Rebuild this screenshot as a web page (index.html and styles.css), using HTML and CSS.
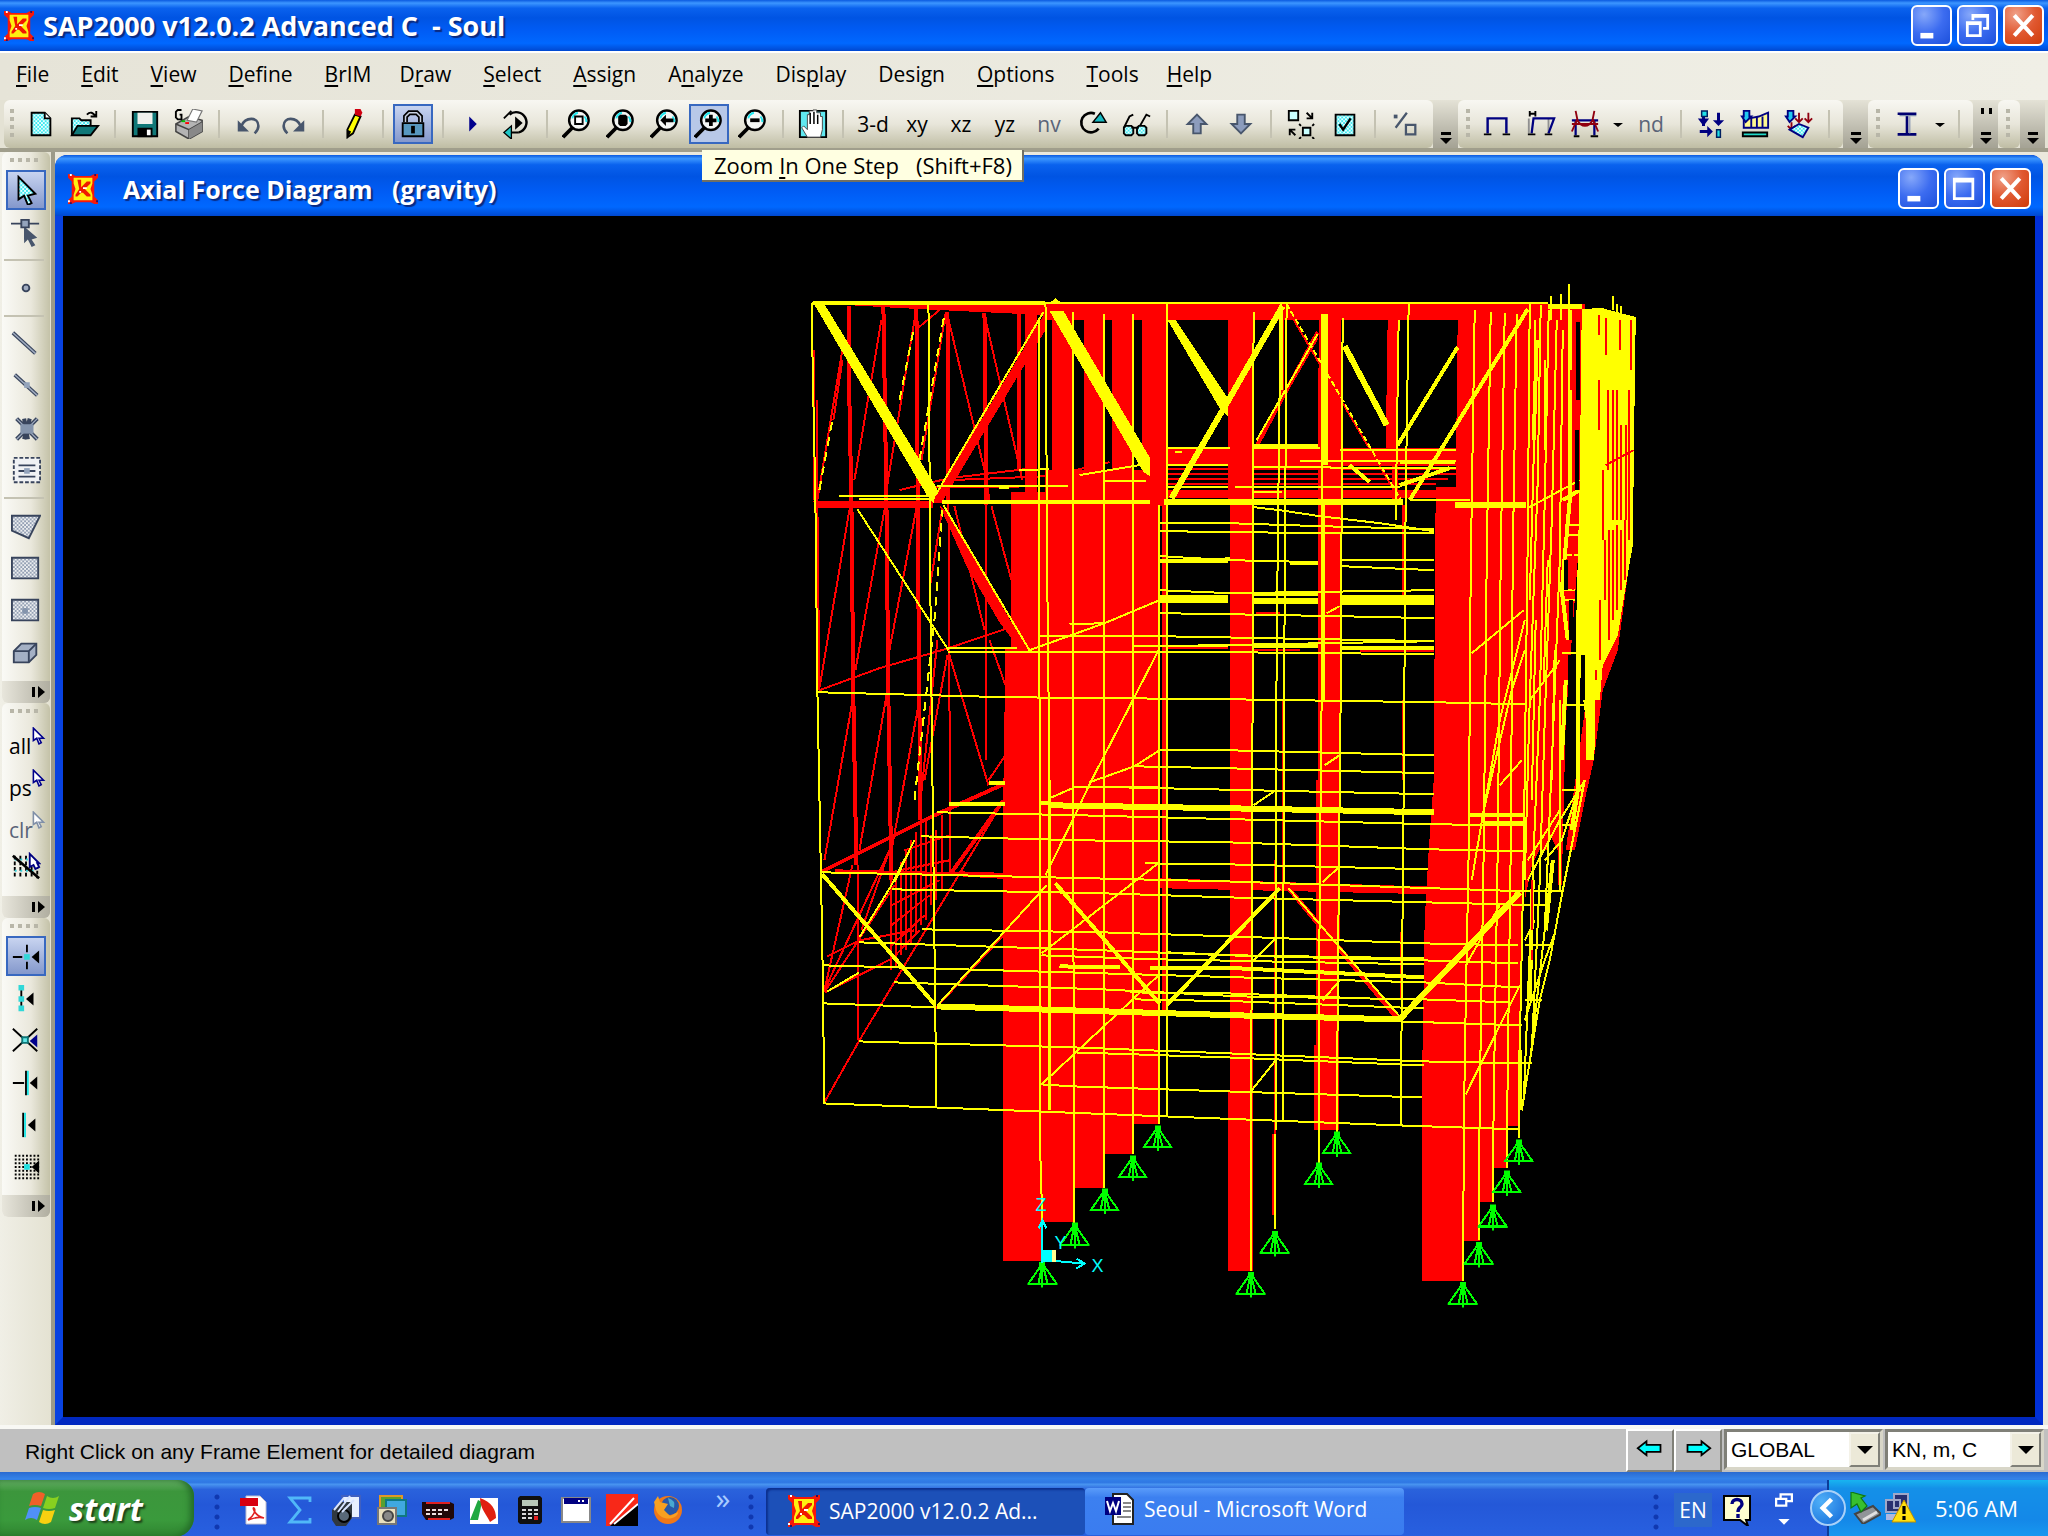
FILE: index.html
```html
<!DOCTYPE html>
<html lang="en">
<head>
    <meta charset="UTF-8">
    <meta name="viewport" content="width=device-width, initial-scale=1.0">
    <title>SAP2000 v12.0.2 Advanced C - Soul</title>
    <link rel="stylesheet" href="styles.css">
</head>
<body>

    <!-- Shared icon parts -->
    <svg class="defs" width="0" height="0" aria-hidden="true">
        <defs>
            <pattern id="dither" width="2" height="2" patternUnits="userSpaceOnUse">
                <rect width="2" height="2" fill="#e8ffff"/><path d="M0 0h1v1H0zM1 1h1v1H1z" fill="#3fe8f0"/>
            </pattern>
            <pattern id="dither-gray" width="2" height="2" patternUnits="userSpaceOnUse">
                <rect width="2" height="2" fill="#eceef0"/><path d="M0 0h1v1H0zM1 1h1v1H1z" fill="#94a0b4"/>
            </pattern>
            <symbol id="sap" viewBox="0 0 16 16">
                <path d="M0 0h2l2 1h8l2-1h2v2l-2 2v8l2 2v2h-2l-2-1H4l-2 1H0v-2l2-2V4L0 2z" fill="#f81808"/>
                <path d="M3 2h10v3l-1 3 1 3v3H3v-3l1-3-1-3z" fill="#fff010"/>
                <path d="M5 3h2v4l3-3h2v1L9 8l3 3v1h-2L8 10H7l-2 2H4v-1l2-3z" fill="#f01800"/>
                <path d="M8 7h2v1H8zM6 9h1v1H6zM1 0h1v1H1zM0 14h1v1H0z" fill="#fff"/>
                <path d="M14 0h1v1h-1zM15 14h1v1h-1zM1 15h1v1H1z" fill="#301060"/>
            </symbol>
            <symbol id="lens" viewBox="0 0 16 16">
                <circle cx="9" cy="6" r="5.200" fill="#f4f6f4" stroke="#000" stroke-width="1.300"/>
                <path d="M5.500 5a4 4 0 0 1 3-3M12 4a4 4 0 0 1 1 3" stroke="#20e8f0" fill="none"/>
                <path d="M5.500 10l-5 5" stroke="#000" stroke-width="2"/>
            </symbol>
            <symbol id="pick" viewBox="0 0 12 16">
                <path d="M1 1v11l3-2 2 5 2-1-2-4h4z" fill="#fff" stroke="currentColor" stroke-width="1.400"/>
            </symbol>
            <symbol id="support" viewBox="0 0 30 26">
                <path d="M15 2L1 22h28zM15 2l-4 20M15 2v24M15 2l5 20" fill="none" stroke="#00ff00" stroke-width="2"/>
                <path d="M12 0h6v6h-6z" fill="#00ff00"/>
            </symbol>
        </defs>
    </svg>

    <!-- Application title bar -->
    <header class="title-bar">
        <svg class="app-icon"><use href="#sap"/></svg>
        <h1>SAP2000 v12.0.2 Advanced C&nbsp; - Soul</h1>
        <div class="window-buttons">
            <button aria-label="Minimize"><svg viewBox="0 0 20 20"><path d="M4 14h7v3H4z" fill="#fff"/></svg></button>
            <button aria-label="Restore"><svg viewBox="0 0 20 20"><path d="M7.500 7V4.500h8v7H13M7 5h9" fill="none" stroke="#fff" stroke-width="1.500"/><path d="M4.500 8.500h7v7h-7zM4 9h8" fill="none" stroke="#fff" stroke-width="1.500"/></svg></button>
            <button class="close" aria-label="Close"><svg viewBox="0 0 20 20"><path d="M5 4.500l10 11M15 4.500l-10 11" stroke="#fff" stroke-width="2.200"/></svg></button>
        </div>
    </header>

    <!-- Menu -->
    <nav class="menu-bar">
        <button><u>F</u>ile</button>
        <button><u>E</u>dit</button>
        <button><u>V</u>iew</button>
        <button><u>D</u>efine</button>
        <button><u>B</u>rIM</button>
        <button class="tight">D<u>r</u>aw</button>
        <button><u>S</u>elect</button>
        <button><u>A</u>ssign</button>
        <button>A<u>n</u>alyze</button>
        <button>Dis<u>p</u>lay</button>
        <button>Desi<u>g</u>n</button>
        <button><u>O</u>ptions</button>
        <button><u>T</u>ools</button>
        <button class="tight"><u>H</u>elp</button>
    </nav>

    <!-- Toolbars -->
    <div class="toolbars">
        <div class="toolbar main-tools">
            <i class="grip"></i>
            <button aria-label="New"><svg viewBox="0 0 16 16"><path d="M3 2h7l3 3v9H3z" fill="url(#dither)" stroke="#000"/><path d="M10 2v3h3" fill="#fff" stroke="#000"/></svg></button>
            <button aria-label="Open"><svg viewBox="0 0 16 16"><path d="M1 14V5h4l1 1h5v3" fill="url(#dither)" stroke="#000"/><path d="M1 14l3-5h11l-4 5z" fill="#107878" stroke="#000"/><path d="M9 3c2-2 3-1 5 1M14 1v3h-3" fill="none" stroke="#000"/></svg></button>
            <i class="sep"></i>
            <button aria-label="Save"><svg viewBox="0 0 16 16"><path d="M1.500 1.500h13v13h-13z" fill="#107878" stroke="#000"/><path d="M4 2h8v6H4z" fill="#f0f0ec"/><path d="M4 10h8v5H4z" fill="#000"/><path d="M9 11h2v3H9z" fill="#fff"/></svg></button>
            <button aria-label="Print graphics"><svg viewBox="0 0 16 16"><path d="M1 8l7-4 7 2v6l-7 4-7-4z" fill="#b4b4b4" stroke="#444" stroke-width=".8"/><path d="M1 8l7 3 7-4M8 11v5" stroke="#444" stroke-width=".8" fill="none"/><path d="M8 11l7-4v5l-7 4z" fill="#888"/><path d="M7 6l3-6 5 1-3 6z" fill="#fff" stroke="#777" stroke-width=".6"/><path d="M6 7h2v1H6z" fill="red"/><path d="M4 6h2v1H4z" fill="#00c000"/><path d="M4 .5H2l-1 1v3l1 1h2V3H3" fill="none" stroke="#000"/></svg></button>
            <i class="sep"></i>
            <button aria-label="Undo"><svg viewBox="0 0 16 16"><path d="M4 9c2-5 9-5 9 0 0 2-1 3-2 4" fill="none" stroke="#48566c" stroke-width="1.400"/><path d="M2 6v6h6z" fill="#48566c"/></svg></button>
            <button aria-label="Redo"><svg viewBox="0 0 16 16"><path d="M12 9C10 4 3 4 3 9c0 2 1 3 2 4" fill="none" stroke="#48566c" stroke-width="1.400"/><path d="M14 6v6H8z" fill="#48566c"/></svg></button>
            <i class="sep"></i>
            <button aria-label="Refresh"><svg viewBox="0 0 16 16"><path d="M9 3l3 1-4 9-3 2V11z" fill="#ffff00" stroke="#000"/><path d="M9 0h3l1 2-1 2-3-1z" fill="#d00010"/><path d="M5 11l2 1-2 4z" fill="#000"/></svg></button>
            <i class="sep"></i>
            <button class="active" aria-label="Lock model"><svg viewBox="0 0 16 16"><path d="M4 7V4l2-2h4l2 2v3" fill="none" stroke="#000" stroke-width="2.600"/><path d="M4 7V4l2-2h4l2 2v3" fill="none" stroke="#c8d0e0" stroke-width=".8"/><path d="M2.500 7.500h11v7h-11z" fill="#5898c0" stroke="#000"/><path d="M7 9h2v4H7z" fill="#000"/></svg></button>
            <i class="sep"></i>
            <button aria-label="Run"><svg viewBox="0 0 16 16"><path d="M6 4l4 4-4 4z" fill="#00008c"/></svg></button>
            <button aria-label="Animate"><svg viewBox="0 0 16 16"><path d="M4 3a5.500 5.500 0 1 1 5 9.500" fill="none" stroke="#000" stroke-width="1.300"/><path d="M7 4l4 3.500L7 11z" fill="#000"/><path d="M1 5l4-4M9 12.500H5" stroke="#000"/><path d="M5 9v7l-4-3.500z" fill="#20c8c8" stroke="#000" stroke-width=".7"/></svg></button>
            <i class="sep"></i>
            <button aria-label="Rubber band zoom"><svg viewBox="0 0 16 16"><use href="#lens"/><path d="M7 4h4v4H7z" fill="#fff" stroke="#000"/></svg></button>
            <button aria-label="Full view"><svg viewBox="0 0 16 16"><use href="#lens"/><path d="M7.500 3h3l1 1v4l-1 1h-3l-1-1V4z"/></svg></button>
            <button aria-label="Previous zoom"><svg viewBox="0 0 16 16"><use href="#lens"/><path d="M5.500 6l3-3v2h4v2h-4v2z"/></svg></button>
            <button class="active zoom-in" aria-label="Zoom in one step"><svg viewBox="0 0 16 16"><use href="#lens"/><path d="M8 3h2v2h2v2h-2v2H8V7H6V5h2z"/></svg>
                <span class="tooltip" role="tooltip">Zoom <u>I</u>n One Step&nbsp;&nbsp; (Shift+F8)</span>
            </button>
            <button aria-label="Zoom out one step"><svg viewBox="0 0 16 16"><use href="#lens"/><path d="M6.500 5h5v2h-5z"/></svg></button>
            <i class="sep"></i>
            <button aria-label="Pan"><svg viewBox="0 0 16 16"><path d="M1 1h14v14H1z" fill="#60e8f0" stroke="#000"/><path d="M5 15l-3-5 1-1 2 2V3h1V1h2V.5h2V2h2v2h1v7l-1 4z" fill="#fff" stroke="#444" stroke-width=".5"/><path d="M6.500 8V2M8.500 8V1.500M10.500 8V3" stroke="#000" stroke-width=".8"/></svg></button>
            <i class="sep"></i>
            <button>3-d</button>
            <button>xy</button>
            <button>xz</button>
            <button>yz</button>
            <button class="dim">nv</button>
            <button aria-label="Rotate 3D view"><svg viewBox="0 0 16 16"><path d="M9 2.500a5.200 5.200 0 1 0 2 8" fill="none" stroke="#000" stroke-width="1.400"/><path d="M12 2l-4 5h7z" fill="#18b8c0" stroke="#000" stroke-width=".8"/></svg></button>
            <button aria-label="Perspective"><svg viewBox="0 0 16 16"><path d="M1 10l3-6 2-1M9 10l4-7 2 1" fill="none" stroke="#000"/><path d="M1 10l1-1h3l1 1v3l-1 1H2l-1-1zM8 10l1-1h3l1 1v3l-1 1H9l-1-1z" fill="url(#dither)" stroke="#000"/><path d="M5 10h4" stroke="#000"/></svg></button>
            <i class="sep"></i>
            <button aria-label="Move up"><svg viewBox="0 0 16 16"><path d="M8 3l5 5h-3v5H6V8H3z" fill="#8c9cbc" stroke="#48566c"/></svg></button>
            <button aria-label="Move down"><svg viewBox="0 0 16 16"><path d="M8 13l5-5h-3V3H6v5H3z" fill="#8c9cbc" stroke="#48566c"/></svg></button>
            <i class="sep"></i>
            <button aria-label="Object shrink"><svg viewBox="0 0 16 16"><path d="M1.500 1h5v5h-5zM9 10h4v4H9z" fill="#c8ffff" stroke="#000"/><path d="M11 2l3 3M14 2v3h-3M5 14l-3-3M2 14v-3h3M8 9l-1-1M14 9l1-1M8 15l-1 1M14 15l1 1" fill="none" stroke="#000"/></svg></button>
            <button aria-label="Display options"><svg viewBox="0 0 16 16"><path d="M3 3h10v11H3z" fill="url(#dither)" stroke="#000"/><path d="M5 8l2 3 4-6" fill="none" stroke="#000" stroke-width="1.300"/></svg></button>
            <i class="sep"></i>
            <button aria-label="Assign to group"><svg viewBox="0 0 16 16"><path d="M3 10l6-8M8.500 8.500h5v5h-5z" fill="none" stroke="#48566c" stroke-width="1.200"/><path d="M2 3h2v2H2z" fill="#48566c"/></svg></button>
        </div>
        <i class="overflow"></i>

        <div class="toolbar">
            <i class="grip"></i>
            <button aria-label="Undeformed shape"><svg viewBox="0 0 16 16"><path d="M3 13V5h10v8" fill="none" stroke="#000080" stroke-width="1.300"/><path d="M1 13.500h4M11 13.500h4" stroke="#000"/></svg></button>
            <button aria-label="Deformed shape"><svg viewBox="0 0 16 16"><path d="M1.500 13V5M12 13V5" stroke="#909090"/><path d="M3 13l1-8h11l-3 8" fill="none" stroke="#000080" stroke-width="1.200"/><path d="M1 13.500h4M10 13.500h4M2 1v3M5 1v3M2 2.500h3" stroke="#000"/></svg></button>
            <button aria-label="Forces"><svg viewBox="0 0 16 16"><path d="M3 14V6h10v8M1 6h14" fill="none" stroke="#000080" stroke-width="1.200"/><path d="M3 1l1 5c2 4 6 4 8 0l1-5M1 12L4 5M15 12l-3-7M1 8h14" fill="none" stroke="#900010"/><path d="M2 14.500h3M11 14.500h4" stroke="#000"/></svg></button>
            <button class="drop" aria-label="Force types"><svg viewBox="0 0 10 16"><path d="M0 7h10l-5 4z"/></svg></button>
            <button class="dim">nd</button>
            <i class="sep"></i>
            <button aria-label="Joint loads"><svg viewBox="0 0 16 16"><path d="M4 1v8M12 2v6M2 12h6" stroke="#000080" stroke-width="1.600"/><path d="M1 5h6l-3 4zM9 6h6l-3 3zM6 9l3 3-3 3z" fill="#000080"/><path d="M3 1h3v3H3zM11 11h2v4h-2z" fill="#20e0e8" stroke="#002060" stroke-width=".8"/></svg></button>
            <button aria-label="Frame loads"><svg viewBox="0 0 16 16"><path d="M2 10V4l3 1 5-1 5-2v8z" fill="#fff890" stroke="#000080"/><path d="M6 4v6M9 4v6M12 4v6" stroke="#000080"/><path d="M2 1h3v3h1L3 7 1 4h1z" fill="#20c8f0" stroke="#000080"/><path d="M1.500 12.500h13v2h-13z" fill="#20d8c8" stroke="#000"/></svg></button>
            <button aria-label="Shell loads"><svg viewBox="0 0 16 16"><path d="M2 1h3v3h1L3 7 1 4h1z" fill="#20c8f0" stroke="#000080"/><path d="M8 2v5M13 2v5M4 7v4M6 5l2 2 2-2M11 5l2 2 2-2M2 9l2 2 2-2" stroke="#900010" fill="none"/><path d="M3 11l5-3 5 2-3 5z" fill="url(#dither)" stroke="#000080"/></svg></button>
            <i class="sep"></i>
        </div>
        <i class="overflow"></i>

        <div class="toolbar">
            <i class="grip"></i>
            <button aria-label="Steel design"><svg viewBox="0 0 16 16"><path d="M3 2.500h10M3 13.500h10M8 3v10" stroke="#000070" stroke-width="1.400"/><path d="M4 3.500h9M9.500 4v9" stroke="#8090b0" stroke-width=".6"/></svg></button>
            <button class="drop" aria-label="Design codes"><svg viewBox="0 0 10 16"><path d="M0 7h10l-5 4z"/></svg></button>
            <i class="sep"></i>
        </div>
        <i class="overflow more"></i>
        <div class="toolbar stub"><i class="grip"></i></div>
        <i class="overflow"></i>
    </div>

    <main class="workspace">
        <!-- Drawing, selection and snap tools -->
        <aside class="dock">
            <div class="side-tools">
                <i class="grip"></i>
                <button class="active" aria-label="Select"><svg viewBox="0 0 16 16"><path d="M4 1v12l3-2 2 5 2-1-2-4 4-1z" fill="url(#dither)" stroke="#000"/></svg></button>
                <button aria-label="Reshape"><svg viewBox="0 0 16 16"><path d="M0 3.500h15M7.500 6v6" fill="none" stroke="#38445c"/><path d="M7 5l7 6-3 1 2 3-2 1-2-4-2 2z" fill="#48566c"/><path d="M5.500 1.500h4v4h-4z" fill="#94a4bc" stroke="#38445c"/></svg></button>
                <i class="sep"></i>
                <button aria-label="Draw joint"><svg viewBox="0 0 16 16"><circle cx="8" cy="8" r="1.800" fill="#a0acc0" stroke="#38445c"/></svg></button>
                <i class="sep"></i>
                <button aria-label="Draw frame"><svg viewBox="0 0 16 16"><path d="M1 2l12 11" stroke="#38445c" stroke-width="2"/><path d="M1 2l12 11" stroke="#a0acc0" stroke-width=".8"/></svg></button>
                <button aria-label="Quick draw frame"><svg viewBox="0 0 16 16"><path d="M2 2l12 11" stroke="#38445c" stroke-width="2"/><path d="M2 2l12 11" stroke="#a0acc0" stroke-width=".8"/><path d="M7 6h3v3H7z" fill="#94a4bc"/></svg></button>
                <button aria-label="Quick draw braces"><svg viewBox="0 0 16 16"><path d="M3 3l11 11M14 3L3 14M7 3l2 11M10 3L7 14" stroke="#38445c" stroke-width="2.200"/><path d="M3 3l11 11M14 3L3 14" stroke="#a0acc0" stroke-width=".7"/><path d="M5 6h7v5H5z" fill="#8494ac"/></svg></button>
                <button aria-label="Quick draw secondary beams"><svg viewBox="0 0 16 16"><path d="M1.500 1.500h14v13h-14z" fill="#f0f2f4" stroke="#38445c" stroke-dasharray="2 1"/><path d="M4 5.500h9M4 8.500h9M4 11.500h9" stroke="#38445c"/><path d="M7 7h3v3H7z" fill="#94a4bc"/></svg></button>
                <i class="sep"></i>
                <button aria-label="Draw poly area"><svg viewBox="0 0 16 16"><path d="M.500 2.500h15l-6 12-9-4z" fill="url(#dither-gray)" stroke="#38445c"/></svg></button>
                <button aria-label="Draw rectangular area"><svg viewBox="0 0 16 16"><path d="M.500 2.500h14v11h-14z" fill="url(#dither-gray)" stroke="#38445c"/></svg></button>
                <button aria-label="Quick draw area"><svg viewBox="0 0 16 16"><path d="M.500 2.500h14v11h-14z" fill="url(#dither-gray)" stroke="#38445c"/><path d="M6 7h3v3H6z" fill="#8494ac"/></svg></button>
                <button aria-label="Draw solid"><svg viewBox="0 0 16 16"><path d="M1.500 7.500l4-4h8v6l-4 4h-8z" fill="#a4b0c4" stroke="#38445c"/><path d="M1.500 7.500h8v6M9.500 7.500l4-4" fill="none" stroke="#38445c"/></svg></button>
                <i class="side-overflow"></i>
            </div>
            <div class="side-tools">
                <i class="grip"></i>
                <button class="word">all<svg class="arrow"><use href="#pick"/></svg></button>
                <button class="word">ps<svg class="arrow"><use href="#pick"/></svg></button>
                <button class="word dim">clr<svg class="arrow"><use href="#pick"/></svg></button>
                <button aria-label="Intersecting line select"><svg viewBox="0 0 16 16"><path d="M2 2v12M5 2v12M8 2v12M11 2v12M14 7v7" stroke="#000" stroke-dasharray="2 1"/><path d="M2 4h12M2 10h12" stroke="#30d0d8" stroke-dasharray="1 2"/><path d="M1 2l14 12" stroke="#000" stroke-width="1.400"/><path d="M10 1v7l2-1 1 2 2-1-1-2h1z" fill="#fff" stroke="#000080"/></svg></button>
                <i class="side-overflow"></i>
            </div>
            <div class="side-tools">
                <i class="grip"></i>
                <button class="active" aria-label="Snap to points"><svg viewBox="0 0 16 16"><path d="M1 8.500h5M8.500 2v4M8.500 11v4" stroke="#000"/><path d="M7 7h3v3H7z" fill="#30d8d8"/><path d="M15 5v7l-4-3.500z"/></svg></button>
                <button aria-label="Snap to ends"><svg viewBox="0 0 16 16"><path d="M5.500 2v12" stroke="#000"/><path d="M4 1h3v3H4zM4 7h3v3H4zM4 12h3v3H4z" fill="#30d8d8"/><path d="M12 5v7L8 8.500z"/></svg></button>
                <button aria-label="Snap to intersections"><svg viewBox="0 0 16 16"><path d="M1 2l13 12M14 2L1 14" stroke="#000"/><path d="M6 6.500h3v3H6z" fill="#60e8e8" stroke="#107878"/><path d="M14 5v7l-4-3.500z" fill="#00008c"/></svg></button>
                <button aria-label="Snap perpendicular"><svg viewBox="0 0 16 16"><path d="M1 8.500h6M8 2v13" stroke="#000"/><path d="M9 2v13" stroke="#20e8e8"/><path d="M14 5v7l-4-3.500z"/></svg></button>
                <button aria-label="Snap to lines"><svg viewBox="0 0 16 16"><path d="M6.500 2v13" stroke="#000"/><path d="M7.500 2v13" stroke="#20e8e8"/><path d="M13 5v7L9 8.500z"/></svg></button>
                <button aria-label="Snap to fine grid"><svg viewBox="0 0 16 16"><path d="M2 2.500h13M2 4.500h13M2 6.500h13M2 8.500h13M2 10.500h13M2 12.500h13M2 14.500h13" stroke="#000" stroke-dasharray="1 1"/><path d="M7 7h3v3H7z" fill="#20e0e0"/><path d="M15 5v7l-4-3.500z"/></svg></button>
                <i class="side-overflow"></i>
            </div>
        </aside>

        <!-- Model view window -->
        <section class="child-window">
            <header class="child-title">
                <svg class="app-icon"><use href="#sap"/></svg>
                <h2>Axial Force Diagram&nbsp;&nbsp; (gravity)</h2>
                <div class="window-buttons">
                    <button aria-label="Minimize"><svg viewBox="0 0 20 20"><path d="M4 14h7v3H4z" fill="#fff"/></svg></button>
                    <button aria-label="Maximize"><svg viewBox="0 0 20 20"><path d="M4.500 5h10v10.500h-10zM4 6h11" fill="none" stroke="#fff" stroke-width="1.500"/></svg></button>
                    <button class="close" aria-label="Close"><svg viewBox="0 0 20 20"><path d="M5 4.500l10 11M15 4.500l-10 11" stroke="#fff" stroke-width="2.200"/></svg></button>
                </div>
            </header>
            <svg class="model" viewBox="64 216 1971 1200" shape-rendering="crispEdges" role="img" aria-label="Axial force diagram">
                <!-- Compression: filled columns and top chord -->
                <g fill="#ff0000">
                    <path d="M830 304H1046V315L960 311L900 308z"/>
                    <path d="M1046 304H1585V320H1046z"/>
                    <path d="M1026 313h12v180h-12zM1052 318h20v175h-20zM1084 318h20v175h-20zM1112 318h20v175h-20zM1142 318h26v188h-26zM1046 470h100v34h-100z"/>
                    <path d="M1012 492H1158V1124H1133V1154H1105V1188H1075V1222H1043V1260H1004V780L1006 649H1012z"/>
                    <path d="M1162 500h5v512h-5z"/>
                    <path d="M1228 320H1253V1270H1228V1090H1230V500H1228z"/>
                    <path d="M1319 318H1341V700L1339 1130H1314V1045H1316V780H1318z"/>
                    <path d="M1388 320h10v180h-6v-50h-6z"/>
                    <path d="M1458 320H1527L1524 900L1519 1100V1126H1508V1168H1494V1202H1480V1240H1464V1280H1422V1100L1425 920L1429 850L1434 780L1436 487H1456z"/>
                    <path d="M1525 304L1586 318L1580 480L1578 560L1572 640L1566 720L1562 885H1558V850L1548 830V850H1542V845L1532 866L1525 900z"/>
                    <path d="M1600 600L1630 560L1618 650L1603 690L1594 760L1585 800L1575 850L1566 850z"/>
                    <path d="M814 501H934V508H816zM1164 448H1456V466H1164zM1164 490H1436V498H1164z"/>
                    <path d="M1046 312V330L942 503H932z"/>
                    <path d="M940 505L948 512L1012 622V638L1000 622L968 568z"/>
                    <path d="M960 871L1225 880L1520 889V892L1436 891V894L1165 888L960 876z"/>
                    <path d="M1286 888H1292L1402 1018L1398 1022z"/>
                </g>

                <!-- Far side frame lines -->
                <g fill="none" stroke="#ff0000" stroke-width="2">
                    <path d="M815 350V500M818 400V505L820 690M1403 505V600M1403 700V780M1401 932V1000M1283 304V400M1283 700V890M1275 860V1134M1273 1134V1215M859 865V1040"/>
                    <path d="M818 500L843 350M855 480L882 320M887 490L915 320M922 460L946 314M948 315L985 470L990 500M985 315L1023 480"/>
                    <path d="M820 688L850 510M856 670L885 510M890 650L917 508M930 590L943 508M955 506L985 630M992 506L1012 580"/>
                    <path d="M825 860L855 690M860 850L888 690M892 850L920 700M925 780L948 655M950 655L989 785M990 640L1006 685M989 780L1006 755"/>
                    <path d="M825 990L853 865M862 930L890 850M825 990L890 850M825 992L895 885M828 956L860 940L915 930M826 992L893 958L920 930"/>
                    <path d="M820 690L880 668L949 648L1008 628M825 1102L860 1040L1004 800"/>
                    <path d="M900 490L950 478L1026 469M860 496H940M950 480L1050 476L1110 462M930 487H1020"/>
                    <path d="M1164 469H1456M1164 474H1456M1164 479H1448M1164 484H1436M1168 454H1228M1164 648H1228M1254 650H1300M1360 651H1434M1256 613H1280"/>
                    <path d="M892 880V970M897 870V968M902 862V955M907 850V950M912 840V945M917 832V935M922 822V925M927 820V920M932 835V905M937 830V900M943 815V890M951 810V875"/>
                    <path d="M892 905L940 880M892 925L930 895M892 945L925 915M900 870L950 860M905 850L950 835"/>
                    <path d="M1403 505L1286 306M938 497L1046 314M936 1008L1047 889M1257 444L1318 338M834 420L843 360M916 330L940 310M920 810L938 640"/>
                </g>
                <g fill="none" stroke="#ff0000" stroke-width="4">
                    <path d="M850 306V400L852 500L854 700L857 865M884 307L887 500L889 700L892 880M917 309L919 600L921 820M948 312L949 500M985 313L987 505M1020 313V470"/>
                    <path d="M823 871L935 815L1004 784M950 875L1004 800M836 871L1000 875M1318 332L1256 448"/>
                    <path d="M1404 505V598M1282 310V400"/>
                </g>
                <path d="M949 500L950 700L951 870M987 505V760" fill="none" stroke="#ff0000" stroke-width="2"/>

                <!-- Tension lines: chords and floors -->
                <g fill="none" stroke="#ffff00" stroke-width="2">
                    <path d="M813 303V350L816 500L818 690L823 950L825 1103L936 1107L1167 1116L1401 1125L1520 1129"/>
                    <path d="M813 303H1548M929 303L931 600L933 780L937 1107M1040 318V690L1041 1160L1043 1225"/>
                    <path d="M1046 304L1048 600L1050 780V1110M1073 312V700L1075 1225M1104 314V1188M1133 314V1154M1159 505V1124M1167 304V1116"/>
                    <path d="M1254 312L1253 700L1251 1270M1281 304L1278 560L1276 780V1130M1287 304L1285 600L1283 1120M1322 314V700L1320 900L1319 1163M1343 318L1341 700L1339 900L1337 1132"/>
                    <path d="M1399 320L1396 520M1409 304L1406 500L1404 790L1401 1125M1275 1134V1228"/>
                    <path d="M1475 310L1471 570L1469 850L1465 1060L1463 1280M1491 312L1487 560L1484 850L1480 1100L1479 1240M1505 313L1501 560L1498 850L1494 1100L1493 1202M1517 314L1513 560L1511 850L1508 1070L1507 1168M1530 303L1528 540L1524 850L1520 1050L1519 1138"/>
                    <path d="M840 496H930M860 499H930M938 486H1068M1000 488H1010M1020 470L1050 469M1080 475L1110 470L1140 465M1105 481H1146"/>
                    <path d="M1168 448H1230M1168 465H1228M1168 487H1228M1254 448H1320M1254 467L1456 468M1300 461H1456M1235 487H1400M1410 500H1470M1175 452H1182M1254 492H1282M1340 450H1456"/>
                    <path d="M1160 523H1228L1320 526L1434 529M1160 531L1320 533H1434M1160 556L1230 560L1318 562M1342 560H1434M1180 562L1230 558M1160 590L1230 593L1434 590M1290 564H1318M1342 566L1434 570M1160 613L1228 614L1340 616L1434 618"/>
                    <path d="M1254 507L1280 510L1320 516L1380 523L1434 531M1070 624L1105 623M1040 636L1160 636L1434 641M1160 646L1434 641M949 648H1018M949 652H1090L1228 652L1434 654M1133 646H1228"/>
                    <path d="M819 692L1007 697L1228 699L1434 702L1525 704M858 509L949 650M944 505L1030 650L1105 623L1160 600M1327 613L1340 606"/>
                    <path d="M1090 782L1135 766L1160 750H1228L1434 755M1133 766L1228 768L1434 773M1120 787L1434 794M1050 798L1075 787L1160 787"/>
                    <path d="M938 812L1080 815L1434 824L1525 825M922 836L1080 840L1228 842L1430 849L1525 851M893 889L1104 893L1228 897L1425 902L1545 905M1145 863L1228 864L1428 869"/>
                    <path d="M823 872L960 875L1225 881L1435 888L1525 891"/>
                    <path d="M923 929L1104 932L1230 936L1424 943L1518 945M860 942L1104 950L1230 955L1424 960L1518 963M1168 952L1240 955L1424 958M1042 955L1160 959L1424 964"/>
                    <path d="M825 965L1104 973L1240 977L1424 982L1518 987M895 982L1104 989L1240 996L1424 999L1510 1002M1135 999L1240 1001L1424 1008M824 1003L937 1007M1400 1021L1522 1025M1130 992L1228 993L1340 997"/>
                    <path d="M860 1041L1075 1047L1230 1053L1424 1061L1532 1063M1075 1052L1228 1057L1424 1065M1042 1084L1075 1086L1228 1091L1422 1097"/>
                    <path d="M1160 648L1092 780L1073 820L1046 875M1042 953L1160 862M1042 1084L1160 974M1254 805L1276 790M1254 960L1276 938M1252 1090L1276 1060M1323 882L1340 866M1323 1000L1340 980M1325 765L1340 755"/>
                    <path d="M1472 653L1524 610M1528 508L1580 480M1530 700L1560 660M1500 785L1522 760M1466 1094L1520 985M1466 965L1500 905M1472 880L1484 810L1500 720L1525 620M1484 810L1512 690L1525 650"/>
                    <path d="M828 991L860 972M860 937L892 885L915 840M895 882L910 850"/>
                    <path d="M1403 503L1287 304" stroke-dasharray="6 3"/>
                    <path d="M936 495L1044 312M938 1005L1047 885M1289 888L1400 1016M1257 440L1318 334"/>
                    <path d="M820 490L833 420M900 400L914 330M920 460L945 314M915 800L935 620L943 510" stroke-dasharray="9 6"/>
                </g>
                <g fill="none" stroke="#ffff00" stroke-width="4">
                    <path d="M814 303H1046M943 502H1150M1281 310V390M1254 446L1318 446M1410 500L1528 309M1398 445L1458 347M1455 462H1400M1350 465L1370 482M1400 485L1450 468"/>
                    <path d="M823 874L880 940L936 1005M1056 883L1160 1003M1167 1005L1280 888M950 804H1006M990 783H1006M1040 803H1050M1470 815H1525M1484 823H1525"/>
                    <path d="M1160 561H1228M1160 597H1228M1254 594H1318M1342 597H1434M1254 646H1318M1342 648H1434M1060 966L1120 967M1150 968H1240L1424 977M1323 505V700"/>
                </g>
                <g fill="none" stroke="#ffff00" stroke-width="6">
                    <path d="M1164 502H1403M1455 505H1526M1050 805L1230 808L1434 812M938 1006L1240 1015L1400 1019M1400 1019L1520 892M1160 600H1228M1254 601H1318M1342 602H1434"/>
                    <path d="M1283 306L1226 405L1172 498M1345 346L1387 425M1325 314V465"/>
                </g>
                <g fill="#ffff00">
                    <path d="M814 303L825 304L938 489L934 503L928 496zM1050 311H1064L1150 457V476L1144 472zM1168 320H1176L1228 398V416L1220 408zM1050 303L1056 298L1062 303z"/>
                </g>

                <!-- Side elevation seen almost edge on -->
                <g fill="#ffff00">
                    <path d="M1582 309L1602 308L1636 317L1635 384L1633 545L1627 580L1618 635L1603 665L1600 700L1594 700V760H1586V720L1576 640L1580 480z"/>
                    <path d="M1548 304H1582V309H1548z"/>
                </g>
                <g fill="none" stroke="#ffff00" stroke-width="2">
                    <path d="M1551 296V320M1561 294V320M1569 284V340M1613 296V310M1617 304V320M1621 306V320M1594 640V750"/>
                    <path d="M1541 305L1538 480L1530 700L1525 880M1549 310L1545 500L1540 700L1532 900L1524 1100M1557 320L1552 520L1545 720L1540 880L1532 1050M1563 330L1560 560L1553 740L1545 930L1530 1063"/>
                    <path d="M1535 320V420L1530 600M1536 620L1532 800M1548 560L1544 680M1545 360V450M1555 650L1552 780M1560 700V890"/>
                    <path d="M1528 880L1560 820L1585 780M1545 860L1562 840L1575 800M1525 1020L1545 960L1556 930M1528 860L1560 810M1525 940L1535 920M1585 780L1575 830L1562 895L1550 960L1540 1000L1522 1110"/>
                    <path d="M1565 525H1580M1565 535H1580M1565 555H1580M1560 590H1575M1562 600H1575M1562 653H1580M1562 705H1586M1562 790H1584M1562 825H1576M1525 945H1552M1525 1000H1542M1525 891H1562"/>
                </g>
                <g fill="none" stroke="#ffff00" stroke-width="4">
                    <path d="M1570 310V500L1562 590L1568 640M1563 500L1580 490M1578 640V790L1572 830M1566 680L1562 760M1553 860L1546 930M1520 1050V1110M1537 340L1534 440M1533 880L1530 1000"/>
                </g>
                <g fill="none" stroke="#000" stroke-width="4">
                    <path d="M1578 322V400M1577 430V490M1566 560V590M1571 600V640M1570 655V700M1572 715V760M1567 730V780M1583 655V700"/>
                </g>
                <g fill="none" stroke="#ff0000" stroke-width="2">
                    <path d="M1599 315V335M1606 318V355M1620 320V350M1631 320V370M1599 380V430M1608 390V470M1613 390V520M1617 390V520M1603 470V540M1621 425V520M1626 425V520M1629 390V540M1605 540V600M1609 530V640M1613 530V620M1617 525V610M1621 530V590M1625 520V580M1571 370V390M1566 430V470M1573 540V590M1562 620V640M1600 600V660M1596 670V680M1532 880V930M1532 950V960M1606 465L1634 450"/>
                </g>

                <!-- Joint supports -->
                <g>
                    <use href="#support" x="1143" y="1125" width="30" height="26"/>
                    <use href="#support" x="1118" y="1155" width="30" height="26"/>
                    <use href="#support" x="1090" y="1188" width="30" height="26"/>
                    <use href="#support" x="1060" y="1222" width="30" height="26"/>
                    <use href="#support" x="1028" y="1261" width="30" height="26"/>
                    <use href="#support" x="1236" y="1271" width="30" height="26"/>
                    <use href="#support" x="1260" y="1230" width="30" height="26"/>
                    <use href="#support" x="1304" y="1162" width="30" height="26"/>
                    <use href="#support" x="1322" y="1131" width="30" height="26"/>
                    <use href="#support" x="1448" y="1281" width="30" height="26"/>
                    <use href="#support" x="1464" y="1241" width="30" height="26"/>
                    <use href="#support" x="1478" y="1204" width="30" height="26"/>
                    <use href="#support" x="1492" y="1170" width="30" height="26"/>
                    <use href="#support" x="1504" y="1139" width="30" height="26"/>
                </g>

                <!-- Global axes -->
                <path d="M1043 1220V1262M1039 1228L1043 1220L1047 1228M1050 1260L1084 1263M1077 1258L1085 1263L1077 1268" fill="none" stroke="#00ffff" stroke-width="2"/>
                <path d="M1043 1249h12v12h-12z" fill="#00ffff"/>
                <path d="M1052 1249h4v12h-4z" fill="#ffff90"/>
                <g class="axis-names">
                    <text x="1036" y="1211">Z</text>
                    <text x="1055" y="1248">Y</text>
                    <text x="1092" y="1271">X</text>
                </g>
            </svg>
        </section>
    </main>

    <!-- Status bar -->
    <footer class="status-bar">
        <p>Right Click on any Frame Element for detailed diagram</p>
        <button aria-label="Previous"><svg viewBox="0 0 16 16"><path d="M1 7l5-4v2h8v4H6v2z" fill="#00ffff" stroke="#000"/></svg></button>
        <button aria-label="Next"><svg viewBox="0 0 16 16"><path d="M15 7l-5-4v2H2v4h8v2z" fill="#00ffff" stroke="#000"/></svg></button>
        <div class="combo">
            <select aria-label="Coordinate system"><option>GLOBAL</option></select>
            <i></i>
        </div>
        <div class="combo">
            <select aria-label="Units"><option>KN, m, C</option></select>
            <i></i>
        </div>
    </footer>

    <!-- Windows taskbar -->
    <div class="taskbar">
        <button class="start">
            <svg viewBox="0 0 20 18"><path d="M5 2q3-2 6 0L9 8q-3-1-6 0z" fill="#f06028"/><path d="M12 3q3 2 6 0l-2 6q-3 1-6 0z" fill="#88d020"/><path d="M3 9q3-1 6 0l-2 6q-3-2-6 0z" fill="#5090f8"/><path d="M10 10q3 1 6 0l-2 6q-3 2-6 0z" fill="#f8d010"/></svg>
            start
        </button>
        <i class="dots"></i>
        <div class="quick-launch">
            <button aria-label="PDF reader"><svg viewBox="0 0 16 16"><path d="M4 1h7l3 3v11H4z" fill="#fff" stroke="#c0c0d0" stroke-width=".5"/><path d="M1 2h9v4H1z" fill="#d80010"/><path d="M5 13c3-2 4-5 3-6s0 4 5 5c-3-1-5 0-8 1" fill="none" stroke="#e02020" stroke-width=".8"/></svg></button>
            <button aria-label="Mathcad"><svg viewBox="0 0 16 16"><path d="M13 4V2H3l5 6-5 6h10v-2" fill="none" stroke="#50b8f8" stroke-width="1.400"/></svg></button>
            <button aria-label="Camera"><svg viewBox="0 0 16 16"><path d="M6 1h9v11H8z" fill="#e8f0ff" stroke="#4060c0"/><path d="M1 8l4-4h6v8l-3 4H3l-2-3z" fill="#303840"/><circle cx="7" cy="11" r="3" fill="#586878" stroke="#000"/><path d="M2 8l5-6M4 9l6-8M6 9l6-6" stroke="#d8e4ff"/></svg></button>
            <button aria-label="Pictures"><svg viewBox="0 0 16 16"><path d="M2 1h11v8H2z" fill="#58a030" stroke="#e09828"/><path d="M5 3h10v8H5z" fill="#40a8e0" stroke="#107880"/><path d="M1 7h9v8H1z" fill="#e8e0c0" stroke="#777"/><circle cx="6" cy="11" r="2.500" fill="#888" stroke="#444"/></svg></button>
            <button aria-label="Section builder"><svg viewBox="0 0 16 16"><path d="M0 4h14l2 1v7l-2 1H2l-2-3z" fill="#200808"/><path d="M2 4.500h12M3 12.500h11" stroke="#e02020"/><path d="M2 8h12M2 10h9" stroke="#f0e0e0" stroke-dasharray="2 1"/></svg></button>
            <button aria-label="AutoCAD viewer"><svg viewBox="0 0 16 16"><path d="M1 2h14v13H1z" fill="#fff"/><path d="M1 13l4-10 2 1-2 9z" fill="#20a840"/><path d="M6 2c6 2 8 6 8 10l-3 2C9 10 6 7 6 2z" fill="#e02010"/></svg></button>
            <button aria-label="Calculator"><svg viewBox="0 0 16 16"><path d="M3 1h10l1 1v12l-1 1H3l-1-1V2z" fill="#101010"/><path d="M4 3h8v3H4z" fill="#b8c8b8"/><path d="M4 8h8M4 10h8M4 12h8" stroke="#d8d8d8" stroke-dasharray="2 1"/><path d="M10 11h2v2h-2z" fill="#e02020"/></svg></button>
            <button aria-label="Show desktop"><svg viewBox="0 0 16 16"><path d="M1 2h14v12H1z" fill="#fff" stroke="#888"/><path d="M2 2h12v3H2z" fill="#000080"/><path d="M9 3h1v1H9zM11 3h1v1h-1z" fill="#fff"/></svg></button>
            <button aria-label="Tekla"><svg viewBox="0 0 16 16"><path d="M0 0h16v5L2 16H0z" fill="#f82818"/><path d="M16 5v11H2z" fill="#000"/><path d="M2 15L14 2M4 15L16 5" stroke="#fff"/></svg></button>
            <button aria-label="Firefox"><svg viewBox="0 0 16 16"><circle cx="8" cy="8" r="7" fill="#f07818"/><circle cx="9" cy="6" r="4.500" fill="#2858a8"/><path d="M1 4l2-3 1 3 4 1-2 3 3 3 4-2c0 4-9 5-11-1z" fill="#f8a020"/><path d="M8 2q4 1 3 5l-2-1z" fill="#48a8d0"/></svg></button>
        </div>
        <button class="more-icons" aria-label="More">&raquo;</button>
        <i class="dots"></i>
        <div class="tasks">
            <button class="task current"><svg><use href="#sap"/></svg>SAP2000 v12.0.2 Ad...</button>
            <button class="task"><svg viewBox="0 0 16 16"><path d="M5 .5h7l3 3v12H5z" fill="#fff" stroke="#222"/><path d="M10 5h4M10 7h4M10 9h4M7 12h7" stroke="#888"/><path d="M1 2h8v9H1z" fill="#000080"/><path d="M2 4l1.500 5L5 5l1.500 4L8 4" fill="none" stroke="#fff"/></svg>Seoul - Microsoft Word</button>
        </div>
        <i class="dots"></i>
        <div class="language-bar">
            <button class="lang">EN</button>
            <button aria-label="Help"><svg class="help" viewBox="0 0 16 16"><path d="M1 1h13v12h-2l1 3-4-3H1z" fill="#ffffd0" stroke="#000"/><path d="M5 5c0-3 5-3 5 0 0 2-2 1-2 4M8 10v2" fill="none" stroke="#000080" stroke-width="1.700"/></svg></button>
            <button class="lang-options" aria-label="Language options"><svg viewBox="0 0 16 32"><path d="M5 6V2h10v6h-4M1 6h9v6H1z" fill="none" stroke="#fff" stroke-width="2"/><path d="M3 24h10l-5 5z" fill="#fff"/></svg></button>
        </div>
        <div class="tray">
            <button class="tray-toggle" aria-label="Hide icons"><svg viewBox="0 0 16 16"><path d="M10 3L5 8l5 5" fill="none" stroke="#fff" stroke-width="2.600"/></svg></button>
            <svg viewBox="0 0 16 16"><path d="M3 11l9-4 4 4-9 5z" fill="#909498" stroke="#444"/><path d="M7 14l7-4" stroke="#e0e0e0" stroke-width="1.500"/><path d="M1 0l7 2-2 1 3 4-3 3-2-4-3 2z" fill="#38c030" stroke="#107810" stroke-width=".6"/></svg>
            <svg viewBox="0 0 16 16"><path d="M5 1h7v7H5zM1 4h7v6H1z" fill="#283070" stroke="#a0a8c8"/><path d="M1 11h5v3H1z" fill="#b0b8e0"/><path d="M10 4l6 11H4z" fill="#ffe010" stroke="#c09000" stroke-width=".5"/><path d="M10 7v4M10 12v2" stroke="#000" stroke-width="1.600"/></svg>
            <time>5:06 AM</time>
        </div>
    </div>

</body>
</html>
```
FILE: styles.css
```css
* {
    box-sizing: border-box;
}

body {
    margin: 0;
    min-height: 100vh;
    display: flex;
    flex-direction: column;
    font-family: "Open Sans", sans-serif;
    font-size: 21px;
    color: #000;
    background-color: #ebe9dd;
    overflow: hidden;
}

button {
    font: inherit;
    color: inherit;
    background: none;
    border: none;
    margin: 0;
    padding: 0;
    display: flex;
    align-items: center;
    justify-content: center;
    flex-shrink: 0;
}

svg {
    display: block;
    flex-shrink: 0;
}

i {
    display: block;
    flex-shrink: 0;
}

u {
    text-underline-offset: 3px;
}

.defs {
    position: absolute;
}

/* Title bars */
.title-bar,
.child-title {
    display: flex;
    align-items: center;
    background: linear-gradient(#0a5ae0 0, #3c96ff 6%, #0a62ee 16%, #0054e3 35%, #005cf5 60%, #0068ff 85%, #0048d0 100%);
}

.title-bar {
    height: 51px;
    padding: 0 4px;
}

.title-bar h1,
.child-title h2 {
    flex: 1;
    margin: 0;
    font-size: 27px;
    line-height: 30px;
    font-weight: bold;
    color: #fff;
    text-shadow: 2px 2px 1px #0a2a80;
}

.child-title h2 {
    font-size: 25px;
}

.app-icon {
    width: 30px;
    height: 30px;
    margin-right: 9px;
}

.window-buttons {
    display: flex;
    gap: 5px;
}

.window-buttons button {
    width: 41px;
    height: 41px;
    border: 2px solid #fff;
    border-radius: 6px;
    background: radial-gradient(circle at 30% 20%, #86a8fa 0, #3c6cf0 50%, #1c50dc 100%);
}

.window-buttons button.close {
    background: radial-gradient(circle at 30% 20%, #f0a088 0, #e05830 50%, #d03c08 100%);
}

.window-buttons svg {
    width: 37px;
    height: 37px;
}

/* Menu */
.menu-bar {
    display: flex;
    height: 49px;
    padding-bottom: 6px;
    border-top: 2px solid #fff;
    background: linear-gradient(90deg, #e6e4d8, #f0efe6);
}

.menu-bar button {
    padding: 0 16px;
}

.menu-bar .tight {
    padding-left: 12px;
}

/* Toolbars */
.toolbars {
    display: flex;
    height: 52px;
    padding: 0 0 0 4px;
    border-bottom: 4px solid #a09e8c;
    background-color: #e4e2d4;
}

.toolbar {
    display: flex;
    align-items: center;
    padding: 0 6px 0 2px;
    border-radius: 6px;
    background: linear-gradient(#f8f7f2, #e8e6da 50%, #bfbda4);
}

.main-tools {
    padding-left: 0;
}

.toolbar button {
    width: 40px;
    height: 40px;
    margin: 0 2px;
}

.toolbar svg,
.side-tools svg {
    width: 30px;
    height: 30px;
}

.toolbar .drop {
    width: 22px;
    margin: 0;
}

.toolbar .drop svg {
    width: 10px;
    height: 16px;
}

.toolbar .active,
.side-tools .active {
    border: 2px solid #3868c0;
    background: linear-gradient(#c8d4f0, #8498cc);
}

.toolbar .zoom-in {
    position: relative;
    background: #b8c8e8;
}

.toolbar .dim,
.side-tools .dim {
    color: #5a6478;
}

.tooltip {
    position: absolute;
    left: 11px;
    top: 44px;
    z-index: 5;
    padding: 0 10px 0 12px;
    font-size: 22px;
    line-height: 30px;
    white-space: nowrap;
    color: #000;
    background: #ffffe1;
    border-right: 2px solid #706f64;
    border-bottom: 2px solid #706f64;
}

.grip {
    width: 4px;
    height: 30px;
    margin: 0 5px 0 6px;
    background: repeating-linear-gradient(#b8b6a8 0 4px, transparent 4px 8px);
}

.sep {
    width: 2px;
    height: 28px;
    margin: 0 7px;
    background: #c4c2b2;
}

.overflow {
    position: relative;
    width: 25px;
    display: flex;
    flex-direction: column;
    align-items: center;
    justify-content: flex-end;
    gap: 3px;
    padding-bottom: 4px;
    background: linear-gradient(#e4e2d6, #a4a294);
}

.overflow::before {
    content: "";
    width: 10px;
    height: 3px;
    background: #000;
}

.overflow::after {
    content: "";
    border-top: 6px solid #000;
    border-left: 6px solid transparent;
    border-right: 6px solid transparent;
}

.overflow.more {
    background: linear-gradient(#000, #000) 8px 8px / 3px 6px no-repeat, linear-gradient(#000, #000) 16px 8px / 3px 6px no-repeat, linear-gradient(#e4e2d6, #a4a294);
}

.toolbar.stub {
    width: 22px;
}

/* Left dock */
.workspace {
    flex: 1;
    display: flex;
    min-height: 0;
    border-bottom: 4px solid #f8f8f4;
}

.dock {
    width: 55px;
    padding-left: 2px;
    border-right: 4px solid #9c9a88;
    background: linear-gradient(90deg, #f0efe6, #e4e2d2);
}

.side-tools {
    width: 48px;
    display: flex;
    flex-direction: column;
    border-radius: 6px;
    background: linear-gradient(90deg, #fafaf6, #eae8dc 60%, #c4c2a8);
}

.side-tools .grip {
    width: 30px;
    height: 4px;
    margin: 6px 8px 7px;
    background: repeating-linear-gradient(90deg, #b8b6a8 0 4px, transparent 4px 8px);
}

.side-tools button {
    width: 40px;
    height: 40px;
    margin: 1px 4px;
}

.side-tools .sep {
    width: 40px;
    height: 2px;
    margin: 6px 2px;
}

.side-tools .word {
    position: relative;
    align-items: flex-end;
    justify-content: flex-start;
    padding-left: 3px;
    line-height: 30px;
}

.side-tools .arrow {
    position: absolute;
    right: 0;
    top: 6px;
    width: 14px;
    height: 18px;
    color: #00008c;
}

.side-tools .dim .arrow {
    color: #8090a8;
}

.side-overflow {
    height: 22px;
    margin-top: 8px;
    background: linear-gradient(90deg, #e8e6dc, #b0aea0);
    border-radius: 0 0 6px 6px;
    display: flex;
    align-items: center;
    justify-content: flex-end;
    padding-right: 5px;
}

.side-overflow::before {
    content: "";
    width: 3px;
    height: 10px;
    background: #000;
}

.side-overflow::after {
    content: "";
    margin-left: 3px;
    border-left: 7px solid #000;
    border-top: 6px solid transparent;
    border-bottom: 6px solid transparent;
}

/* Model window */
.child-window {
    flex: 1;
    display: flex;
    flex-direction: column;
    margin: 3px 5px 0 0;
    border: 8px solid #0030d8;
    border-top: none;
    border-left-color: #0842e0;
    border-bottom-color: #0028c0;
    border-radius: 12px 12px 0 0;
    background: #000;
}

.child-title {
    height: 61px;
    margin: 0 -8px;
    padding: 6px 12px 0 13px;
    border-radius: 12px 12px 0 0;
}

.child-title .app-icon {
    margin-right: 25px;
}

.model {
    flex: 1;
    width: 100%;
    min-height: 0;
}

.axis-names {
    font-family: "Liberation Sans", sans-serif;
    font-size: 18px;
    fill: #00ffff;
}

/* Status bar */
.status-bar {
    display: flex;
    height: 43px;
    padding-right: 4px;
    background: #c0c0c0;
    font-family: "Liberation Sans", sans-serif;
}

.status-bar p {
    flex: 1;
    margin: 0;
    padding-left: 25px;
    line-height: 46px;
}

.status-bar button {
    width: 48px;
    border: 2px solid;
    border-color: #fff #808078 #808078 #fff;
}

.status-bar button svg {
    width: 28px;
    height: 28px;
}

.combo {
    position: relative;
    width: 159px;
    margin-left: 2px;
}

.combo select {
    appearance: none;
    width: 100%;
    height: 41px;
    padding: 0 40px 0 4px;
    border: 3px solid;
    border-color: #808078 #d8d6c8 #d8d6c8 #808078;
    border-radius: 0;
    background: #fff;
    font: inherit;
    color: #000;
}

.combo i {
    position: absolute;
    right: 3px;
    top: 3px;
    width: 31px;
    height: 35px;
    border: 2px solid;
    border-color: #f4f2e8 #808078 #808078 #f4f2e8;
    background: #ece9d8;
    pointer-events: none;
}

.combo i::after {
    content: "";
    position: absolute;
    left: 6px;
    top: 12px;
    border-top: 8px solid #000;
    border-left: 8px solid transparent;
    border-right: 8px solid transparent;
}

/* Taskbar */
.taskbar {
    display: flex;
    align-items: stretch;
    height: 65px;
    color: #fff;
    background: linear-gradient(#2a6ad0 0, #3482e8 10%, #2f78e4 16%, #4894f0 19%, #2a62dc 27%, #2458d8 50%, #2860e0 100%);
}

.start {
    width: 194px;
    margin-top: 8px;
    padding-right: 28px;
    gap: 6px;
    font-size: 32px;
    font-weight: bold;
    font-style: italic;
    text-shadow: 2px 2px 2px #1c4018;
    border-radius: 0 16px 20px 0;
    background: linear-gradient(#68b068 0, #3c963c 20%, #3a9a3c 70%, #2f8430 100%);
    box-shadow: inset -4px 0 6px #246c28;
}

.start svg {
    width: 40px;
    height: 38px;
}

.dots {
    width: 10px;
    margin: 20px 0 5px 18px;
    background: radial-gradient(circle, #1038b0 2px, transparent 3px) 0 0 / 10px 10px;
}

.quick-launch {
    display: flex;
    padding: 12px 0 0 9px;
}

.quick-launch button {
    width: 46px;
}

.quick-launch svg,
.task svg,
.tray svg,
.help {
    width: 32px;
    height: 32px;
}

.more-icons {
    width: 46px;
    margin-left: 9px;
    font-size: 30px;
    line-height: 36px;
    align-items: flex-start;
    padding-top: 8px;
    color: #a8ccff;
}

.more-icons + .dots {
    margin-left: 0;
}

.tasks {
    flex: 1;
    display: flex;
    padding: 16px 0 2px 10px;
}

.task {
    width: 319px;
    justify-content: flex-start;
    gap: 9px;
    padding: 0 0 4px 18px;
    white-space: nowrap;
    border-radius: 4px;
    background: linear-gradient(#5a9cfa, #3c80f0 20%, #3a7cf0);
}

.task.current {
    padding: 0 0 0 22px;
    background: #1c50b8;
    box-shadow: inset 2px 2px 2px #0c3090;
}

.language-bar {
    display: flex;
    align-items: center;
    padding: 12px 23px 0 13px;
    gap: 6px;
}

.lang {
    width: 38px;
    height: 34px;
    background: #2c68cc;
}

.language-bar button + button {
    width: 40px;
}

.lang-options svg {
    width: 18px;
    height: 36px;
}

.tray {
    width: 221px;
    margin-top: 8px;
    padding: 0;
    display: flex;
    align-items: center;
    gap: 3px;
    border-left: 2px solid #0c3c98;
    background: linear-gradient(#18b4f0 0, #1490e8 15%, #1488e8 70%, #1898f0 100%);
}

.tray-toggle {
    width: 36px;
    height: 36px;
    margin-left: -19px;
    border-radius: 50%;
    border: 2px solid #a8d0f8;
    background: radial-gradient(circle at 30% 30%, #50b0f8, #1068d8);
}

.tray .tray-toggle svg {
    width: 28px;
    height: 28px;
}

.tray time {
    margin-left: 16px;
    font-size: 22px;
}
```
